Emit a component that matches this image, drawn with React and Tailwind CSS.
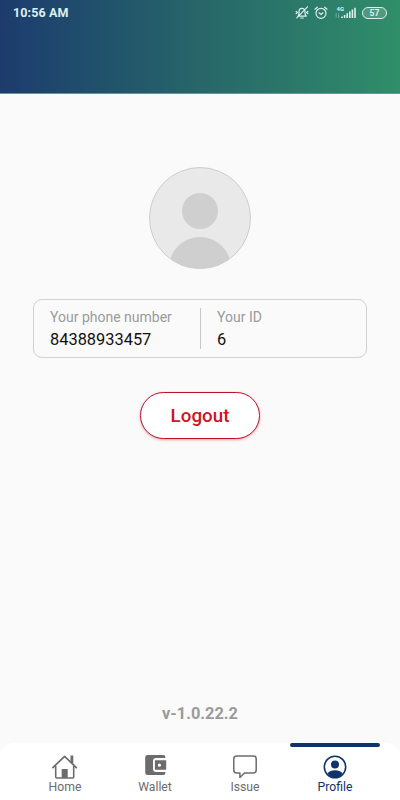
const HomeIcon = () => (
  <svg width="26" height="24" viewBox="0 0 26 24" fill="none" stroke="currentColor">
    <path d="M.9 12.600 12.600 1.300l11.700 11.300" strokeWidth="1.700" strokeLinecap="round" strokeLinejoin="round" />
    <path d="M3.700 11v11.100q0 .9.900.9h16.200q.9 0 .9-.9V11" strokeWidth="1.600" />
    <path d="M9.700 14h6v9h-6z" fill="currentColor" stroke="none" />
    <path d="M18.500.6h2.800v8.200l-2.800-2.600z" fill="currentColor" stroke="none" />
  </svg>
);

const WalletIcon = () => (
  <svg className="ml-0.5" width="22" height="20" viewBox="0 0 22 20">
    <path
      d="M2.500 0H18.500a1.800 1.800 0 0 1 1.800 1.800v1.300H11a3 3 0 0 0-3 3v8a3 3 0 0 0 3 3h9.300v1.200a1.800 1.800 0 0 1-1.800 1.700H2.500A2.300 2.300 0 0 1 .2 17.700V2.300A2.300 2.300 0 0 1 2.500 0Z"
      fill="currentColor"
    />
    <path
      fillRule="evenodd"
      d="M9.900 5.300H21.200v9.500H9.900zM14.400 8.600a1.600 1.600 0 1 0 0 3.200 1.600 1.600 0 0 0 0-3.200Z"
      fill="currentColor"
    />
  </svg>
);

const IssueIcon = () => (
  <svg width="24" height="24" viewBox="0 0 24 24" fill="none" stroke="currentColor" strokeWidth="1.500" strokeLinejoin="round">
    <path d="M3.800 1h16.400q3 0 3 3v11q0 3-3 3h-8.700l-4.600 4.500V18H3.800q-3 0-3-3V4q0-3 3-3Z" />
  </svg>
);

const ProfileIcon = () => (
  <svg width="24" height="24" viewBox="0 0 24 24">
    <circle cx="12" cy="12" r="10.700" fill="none" stroke="currentColor" strokeWidth="1.600" />
    <circle cx="12" cy="9.500" r="4" fill="currentColor" />
    <path d="M4.500 18.200Q7 15.200 12 15.200t7.500 3Q16.700 22.500 12 22.500t-7.500-4.300Z" fill="currentColor" />
  </svg>
);

const MutedIcon = () => (
  <svg width="14" height="14" viewBox="0 0 14 14" fill="none" stroke="currentColor" strokeWidth="1.200" strokeLinecap="round" strokeLinejoin="round">
    <path d="M3 10.200Q4 9 4 7V5.500a3 3 0 0 1 6-.2V7q0 2 1.300 3.200ZM5.800 12h2.400M12.500.8 1.800 11.800M1.200 5.500l1.200 1-1.200 1M12.800 5.500l-1.200 1 1.200 1" />
  </svg>
);

const AlarmIcon = () => (
  <svg width="14" height="14" viewBox="0 0 14 14" fill="none" stroke="currentColor" strokeWidth="1.200" strokeLinecap="round">
    <circle cx="7" cy="7.300" r="5" />
    <path d="m5 6.800 2 1.600 2-1.600M1 3.200 3.300 1.200M13 3.200l-2.300-2" />
  </svg>
);

const SignalIcon = () => (
  <svg width="22" height="14" viewBox="0 0 22 14" fill="currentColor">
    <text x="1.500" y="5.300" fontSize="6" fontWeight="700" fontFamily="Roboto, sans-serif">4G</text>
    <path d="M6.200 10.500h1.600V12H6.200zM8.800 9h1.600v3H8.800zM11.400 7.200H13V12h-1.600zM14 5.400h1.600V12H14zM16.600 3.500h1.600V12h-1.600zM19.200 1.700h1.600V12h-1.600z" />
    <path d="M1.200 7.500v4M.4 8.300l.8-.8M3.500 7.500v4l.8-.8" fill="none" stroke="currentColor" strokeWidth=".6" opacity=".6" />
  </svg>
);

const tabs = [
  { label: "Home", icon: HomeIcon },
  { label: "Wallet", icon: WalletIcon },
  { label: "Issue", icon: IssueIcon },
  { label: "Profile", icon: ProfileIcon, active: true },
];

const Header = () => (
  <header className="h-[94px] shrink-0 border-b border-[#6c939c] bg-linear-to-r from-[#1d3b6d] via-[#276669] to-[#308e69]">
    <div className="flex h-[25px] items-center justify-between px-[13px] text-[#dceff0]">
      <span className="pt-px text-[12.500px] font-bold leading-none tracking-[0.1px]">10:56 AM</span>
      <div className="flex items-center">
        <MutedIcon />
        <span className="ml-[5px] flex"><AlarmIcon /></span>
        <span className="ml-[7px] flex"><SignalIcon /></span>
        <span className="ml-[5px] flex h-3 w-[25px] items-center justify-center rounded-full border border-current bg-white/15 pt-px text-[8.500px] font-bold leading-none">
          57
        </span>
      </div>
    </div>
  </header>
);

const Avatar = () => (
  <svg className="mt-[73px]" width="102" height="102" viewBox="0 0 102 102">
    <defs>
      <clipPath id="avatar">
        <circle cx="51" cy="51" r="50.500" />
      </clipPath>
    </defs>
    <circle cx="51" cy="51" r="50.500" fill="#e9e9e9" />
    <g clipPath="url(#avatar)" fill="#cfcfcf">
      <circle cx="51" cy="44" r="18" />
      <circle cx="51" cy="101" r="31" />
    </g>
    <circle cx="51" cy="51" r="50.500" fill="none" stroke="#cdcdcd" />
  </svg>
);

export default function App() {
  return (
    <div className="flex h-[800px] w-[400px] flex-col overflow-hidden bg-[#fafafa] font-['Roboto',sans-serif]">
      <Header />

      <main className="flex flex-1 flex-col items-center">
        <Avatar />

        {/* Account info */}
        <section className="mt-[30px] flex h-[59px] w-[334px] items-center rounded-[9px] border border-[#d0d0d0]">
          <div className="flex h-[41px] w-[167px] flex-col justify-center border-r border-[#c8c8c8] pl-4">
            <p className="text-[14px] leading-[21px] text-[#9b9b9b]">Your phone number</p>
            <p className="text-[16.400px] leading-[23px] text-[#111]">84388933457</p>
          </div>
          <div className="flex h-[41px] flex-col justify-center pl-4">
            <p className="text-[14px] leading-[21px] text-[#9b9b9b]">Your ID</p>
            <p className="text-[16.400px] leading-[23px] text-[#111]">6</p>
          </div>
        </section>

        <button className="mt-[34px] h-[47px] w-[120px] rounded-full border border-[#bd1029] bg-white text-[18.800px] font-medium leading-6 text-[#cf1424] shadow-[0_1px_3px_rgba(190,20,40,0.35)]">
          Logout
        </button>

        <p className="mb-[19px] mt-auto text-[16.400px] font-bold leading-5 text-[#9a9a9a]">v-1.0.22.2</p>
      </main>

      <nav className="flex h-[57px] shrink-0 rounded-t-[14px] bg-white px-5">
        {tabs.map(({ label, icon: Icon, active }) => (
          <button key={label} className={`flex w-[90px] flex-col items-center ${active ? "text-[#0e346b]" : "text-[#6c6c6c]"}`}>
            <span className={`h-1 w-full rounded-full ${active ? "bg-[#0e346b]" : ""}`} />
            <span className="mt-2 flex h-6">
              <Icon />
            </span>
            <span className="text-[12.200px] leading-4">{label}</span>
          </button>
        ))}
      </nav>
    </div>
  );
}
